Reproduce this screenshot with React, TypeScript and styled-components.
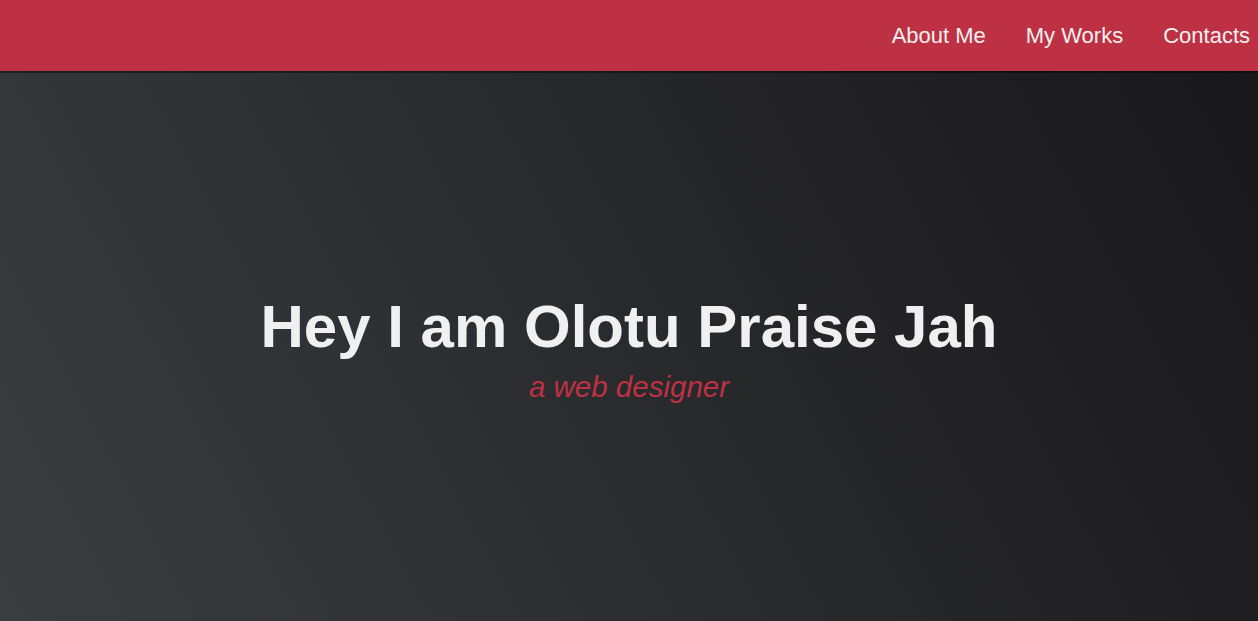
import React from "react";
import styled, { createGlobalStyle } from "styled-components";

const Global = createGlobalStyle`
  * { box-sizing: border-box; }
  html, body { margin: 0; padding: 0; }
  body { font-family: "Liberation Sans", Arial, sans-serif; background: #1b1b1d; overflow: hidden; }
`;

const Page = styled.div`
  display: flex;
  flex-direction: column;
  height: 621px;
`;

const Nav = styled.nav`
  display: flex;
  justify-content: flex-end;
  align-items: center;
  height: 71px;
  background: #be3144;
  box-shadow: 0 2px 0 rgba(0, 0, 0, 0.4);
  position: relative;
  z-index: 2;
  padding-right: 8px;
`;

const NavList = styled.ul`
  display: flex;
  gap: 40px;
  list-style: none;
  margin: 0;
  padding: 0;
`;

const NavLink = styled.a`
  color: #f0f0f0;
  font-size: 22px;
  text-decoration: none;
`;

const Hero = styled.section`
  flex: 1;
  display: flex;
  flex-direction: column;
  align-items: center;
  justify-content: center;
  background: linear-gradient(62deg, #3a3d40 0%, #181719 100%);
  padding-top: 5px;
`;

const Title = styled.h1`
  margin: 0;
  color: #f0f0f0;
  font-size: 60px;
  font-weight: 700;
  line-height: 1.1;
`;

const Subtitle = styled.p`
  margin: 10px 0 0;
  color: #be3144;
  font-size: 29.5px;
  font-style: italic;
  font-weight: 400;
`;

export default function App() {
  return (
    <>
      <Global />
      <Page>
        <Nav>
          <NavList>
            <li><NavLink href="#about">About Me</NavLink></li>
            <li><NavLink href="#works">My Works</NavLink></li>
            <li><NavLink href="#contacts">Contacts</NavLink></li>
          </NavList>
        </Nav>
        <Hero>
          <Title>Hey I am Olotu Praise Jah</Title>
          <Subtitle>a web designer</Subtitle>
        </Hero>
      </Page>
    </>
  );
}
